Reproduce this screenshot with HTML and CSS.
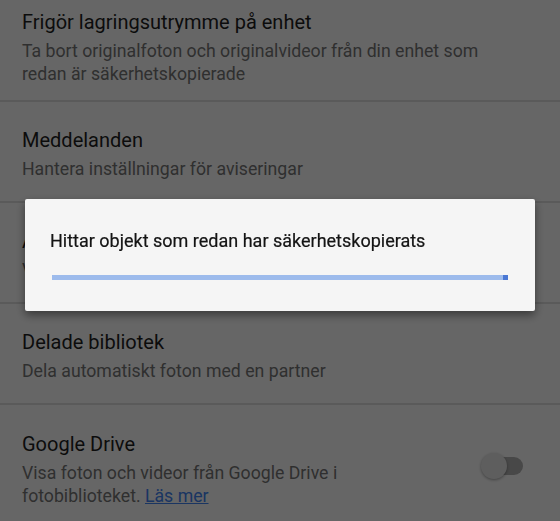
FILE: index.html
```html
<!DOCTYPE html>
<html lang="sv">
<head>
<meta charset="utf-8">
<link rel="stylesheet" href="styles.css">
</head>
<body>
<div class="list">
  <div class="row row-first">
    <div class="title">Frigör lagringsutrymme på enhet</div>
    <div class="sub">Ta bort originalfoton och originalvideor från din enhet som redan är säkerhetskopierade</div>
  </div>
  <div class="row">
    <div class="title">Meddelanden</div>
    <div class="sub">Hantera inställningar för aviseringar</div>
  </div>
  <div class="row">
    <div class="title">Arkivera</div>
    <div class="sub">Visa arkiverade objekt</div>
  </div>
  <div class="row">
    <div class="title">Delade bibliotek</div>
    <div class="sub">Dela automatiskt foton med en partner</div>
  </div>
  <div class="row row-toggle">
    <div class="text">
      <div class="title">Google Drive</div>
      <div class="sub">Visa foton och videor från Google Drive i fotobiblioteket. <a class="link" href="#">Läs mer</a></div>
    </div>
    <div class="switch"><span class="thumb"></span></div>
  </div>
</div>
<div class="scrim">
  <div class="dialog">
    <div class="dlg-text">Hittar objekt som redan har säkerhetskopierats</div>
    <div class="progress"><span class="progress-end"></span></div>
  </div>
</div>
</body>
</html>
```
FILE: styles.css
```css
html, body {
  margin: 0;
  padding: 0;
}
body {
  width: 560px;
  height: 521px;
  overflow: hidden;
  background: #ffffff;
  font-family: Roboto, "Noto Sans", sans-serif;
}
.list {
  display: flex;
  flex-direction: column;
}
.row {
  padding: 24px 62px 0 22px;
  height: 101px;
  box-sizing: border-box;
  border-bottom: 2px solid #e0e0e0;
}
.row-first {
  padding-top: 8px;
  height: 102px;
}
.title {
  font-size: 20px;
  line-height: 28px;
  color: #1f1f1f;
}
.sub {
  font-size: 17.7px;
  line-height: 23px;
  color: #777777;
  margin-top: 4px;
}
.row-toggle {
  display: flex;
  align-items: flex-start;
  border-bottom: none;
  padding-top: 25px;
  padding-right: 0;
}
.text {
  width: 430px;
}
.switch {
  position: relative;
  margin-left: 35px;
  margin-top: 27px;
  width: 36px;
  height: 18px;
  border-radius: 9px;
  background: #b4b4b4;
}
.thumb {
  position: absolute;
  left: -6px;
  top: -4px;
  width: 26px;
  height: 26px;
  border-radius: 50%;
  background: #ececec;
  box-shadow: 0 1px 3px rgba(0,0,0,0.35);
}
.link {
  color: #4285f4;
  text-decoration: underline;
}
.scrim {
  position: fixed;
  inset: 0;
  background: rgba(0, 0, 0, 0.6);
  display: flex;
  justify-content: center;
  align-items: flex-start;
  padding-top: 199px;
}
.dialog {
  width: 510px;
  height: 112px;
  box-sizing: border-box;
  background: #f5f5f5;
  border-radius: 2px;
  box-shadow: 0 4px 10px rgba(0,0,0,0.45);
  padding: 30px 27px 0 25px;
}
.dlg-text {
  font-size: 18px;
  line-height: 24px;
  color: #141414;
  -webkit-text-stroke: 0.2px #141414;
}
.progress {
  position: relative;
  margin-top: 22px;
  margin-left: 2px;
  height: 5px;
  background: #9dbbec;
}
.progress-end {
  position: absolute;
  right: 0;
  top: 0;
  width: 5px;
  height: 5px;
  background: #4a78d4;
}
```
